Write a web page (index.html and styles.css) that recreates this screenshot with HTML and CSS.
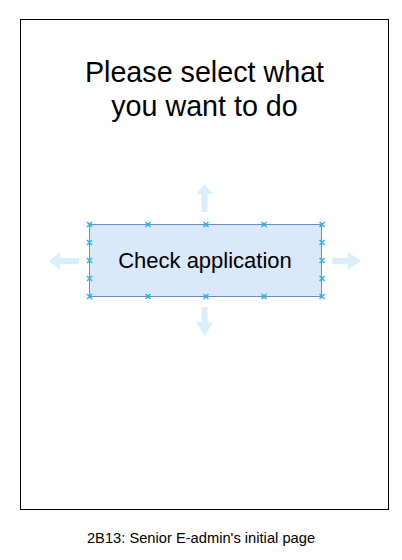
FILE: index.html
```html
<!DOCTYPE html>
<html>
<head>
    <meta name="viewport" content="width=device-width, initial-scale=1.0">
    <link rel="stylesheet" href="styles.css">
</head>
<body>

<div class="frame">
    <h1 class="title">Please select what<br>you want to do</h1>

    <div class="picker">
        <svg class="arrow arrow-v" width="17" height="28" viewBox="0 0 17 28">
            <polygon points="0,10 8.5,0 17,10"/>
            <rect x="5.5" y="10" width="6" height="18"/>
        </svg>

        <div class="middle">
            <svg class="arrow arrow-h" width="30" height="18" viewBox="0 0 30 18">
                <polygon points="11,0 0,9 11,18"/>
                <rect x="11" y="6" width="19" height="6"/>
            </svg>

            <div class="option">
                Check application
                <svg class="handles" width="233" height="73" viewBox="0 0 233 73">
                    <path d="M-2,-2l5,5m0,-5l-5,5 M56.5,-2l5,5m0,-5l-5,5 M114.5,-2l5,5m0,-5l-5,5 M172.5,-2l5,5m0,-5l-5,5 M230.5,-2l5,5m0,-5l-5,5
                             M-2,70l5,5m0,-5l-5,5 M56.5,70l5,5m0,-5l-5,5 M114.5,70l5,5m0,-5l-5,5 M172.5,70l5,5m0,-5l-5,5 M230.5,70l5,5m0,-5l-5,5
                             M-2,16l5,5m0,-5l-5,5 M-2,34l5,5m0,-5l-5,5 M-2,52l5,5m0,-5l-5,5
                             M230.5,16l5,5m0,-5l-5,5 M230.5,34l5,5m0,-5l-5,5 M230.5,52l5,5m0,-5l-5,5"/>
                </svg>
            </div>

            <svg class="arrow arrow-h" width="29" height="18" viewBox="0 0 29 18">
                <rect x="0" y="6" width="17" height="6"/>
                <polygon points="16,0 29,9 16,18"/>
            </svg>
        </div>

        <svg class="arrow arrow-v" width="17" height="29" viewBox="0 0 17 29">
            <rect x="5.5" y="0" width="6" height="16"/>
            <polygon points="0,15 8.5,29 17,15"/>
        </svg>
    </div>
</div>

<p class="caption">2B13: Senior E-admin's initial page</p>

</body>
</html>
```

FILE: styles.css
```css
* {
    box-sizing: border-box;
}

body {
    margin: 0;
    background-color: #ffffff;
    font-family: "Liberation Sans", Arial, sans-serif;
    color: #000000;
}

.frame {
    width: 369px;
    height: 491px;
    margin: 19px 0 0 20px;
    border: 1px solid #000000;
    padding-top: 35px;
}

.title {
    margin: 0;
    font-size: 28.7px;
    font-weight: normal;
    line-height: 34px;
    text-align: center;
}

.picker {
    display: flex;
    flex-direction: column;
    align-items: center;
    margin-top: 61px;
}

.middle {
    display: flex;
    align-items: center;
    margin: 12px 0 10px 0;
}

.arrow {
    display: block;
    fill: #d8effb;
}

.arrow-h {
    margin: 0 10px;
}

.option {
    position: relative;
    width: 233px;
    height: 73px;
    border: 1px solid #6c8ebf;
    background-color: #dae8fc;
    display: flex;
    align-items: center;
    justify-content: center;
    font-size: 22px;
}

.handles {
    position: absolute;
    left: -1px;
    top: -1px;
    overflow: visible;
    fill: none;
    stroke: #29b6f2;
    stroke-width: 1.5;
}

.caption {
    margin: 20px 0 0 0;
    font-size: 14.7px;
    line-height: 17px;
    text-align: center;
}
```
